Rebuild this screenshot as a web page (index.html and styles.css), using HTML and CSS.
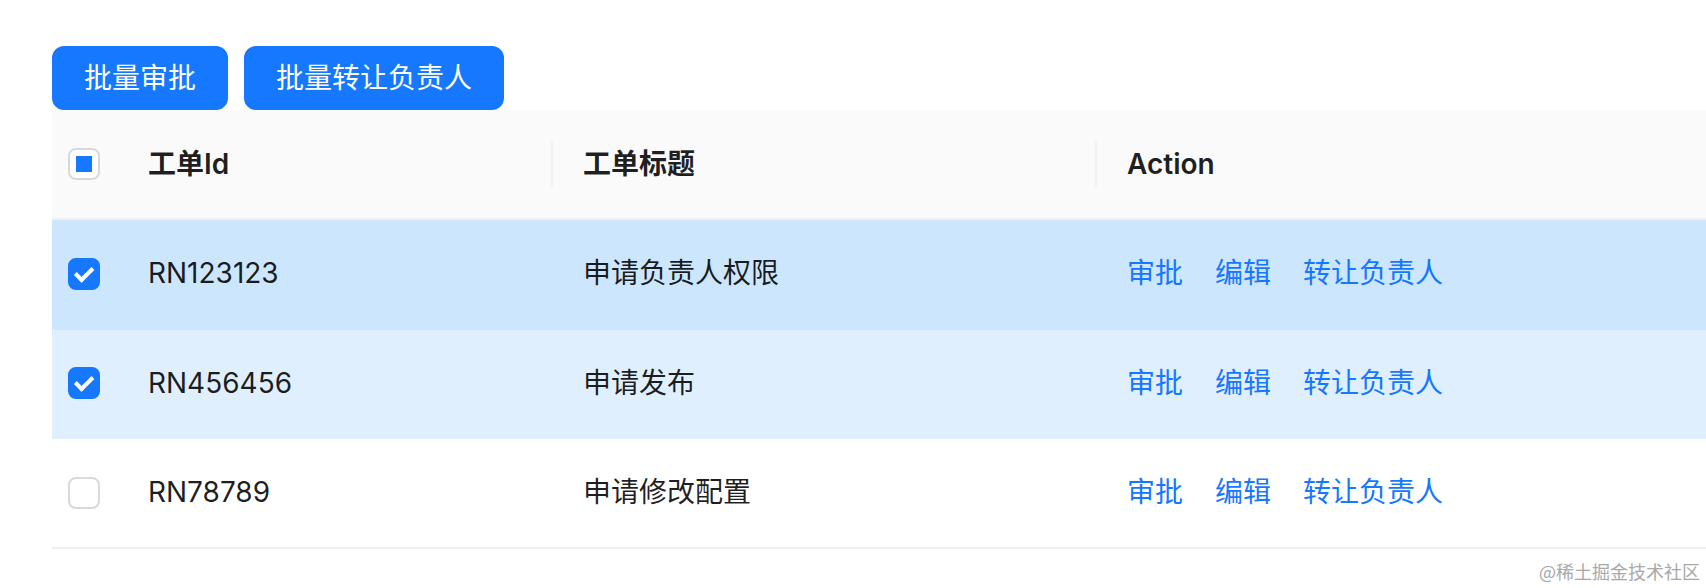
FILE: index.html
```html
<!DOCTYPE html>
<html lang="zh-CN">
  <head>
    <meta charset="UTF-8" />
    <meta name="viewport" content="width=device-width, initial-scale=1.0" />
    <title>工单列表</title>
    <link rel="stylesheet" href="styles.css">
  </head>
  <body>
    <div class="page">
      <div class="toolbar">
        <button class="btn">批量审批</button>
        <button class="btn">批量转让负责人</button>
      </div>
      <table class="ticket-table">
        <colgroup>
          <col class="col-select" />
          <col class="col-id" />
          <col class="col-title" />
          <col />
        </colgroup>
        <thead>
          <tr>
            <th class="cell-select"><span class="checkbox half"></span></th>
            <th>工单Id</th>
            <th class="split">工单标题</th>
            <th class="split">Action</th>
          </tr>
        </thead>
        <tbody>
          <tr class="selected hover">
            <td class="cell-select"><span class="checkbox checked"></span></td>
            <td>RN123123</td>
            <td>申请负责人权限</td>
            <td class="actions"><a>审批</a><a>编辑</a><a>转让负责人</a></td>
          </tr>
          <tr class="selected">
            <td class="cell-select"><span class="checkbox checked"></span></td>
            <td>RN456456</td>
            <td>申请发布</td>
            <td class="actions"><a>审批</a><a>编辑</a><a>转让负责人</a></td>
          </tr>
          <tr>
            <td class="cell-select"><span class="checkbox"></span></td>
            <td>RN78789</td>
            <td>申请修改配置</td>
            <td class="actions"><a>审批</a><a>编辑</a><a>转让负责人</a></td>
          </tr>
        </tbody>
      </table>
    </div>
    <div class="watermark">@稀土掘金技术社区</div>
  </body>
</html>
```

FILE: styles.css
```css
body {
  margin: 0;
  background: #fff;
  font-family: Inter, "Noto Sans CJK SC", sans-serif;
  color: rgba(0, 0, 0, 0.88);
}
.page {
  padding: 46px 0 0 52px;
}
.toolbar {
  display: flex;
  gap: 16px;
}
.btn {
  height: 64px;
  padding: 0 30px;
  border: 2px solid #1677ff;
  border-radius: 12px;
  background: #1677ff;
  color: #fff;
  font-family: inherit;
  font-size: 28px;
  line-height: 40px;
  cursor: pointer;
}
.ticket-table {
  width: 100%;
  border-collapse: collapse;
  table-layout: fixed;
  font-size: 28px;
}
.col-select {
  width: 64px;
}
.col-id {
  width: 435px;
}
.col-title {
  width: 544px;
}
.ticket-table th {
  position: relative;
  padding: 32px;
  line-height: 44px;
  text-align: left;
  font-weight: 600;
  background: #fafafa;
  border-bottom: 2px solid #f0f0f0;
}
.ticket-table th.split::before {
  content: "";
  position: absolute;
  left: 0;
  top: 50%;
  width: 2px;
  height: 44px;
  transform: translateY(-50%);
  background: #f0f0f0;
}
.ticket-table td {
  padding: 32px;
  line-height: 43.5px;
  border-bottom: 2px solid #f0f0f0;
}
.ticket-table .cell-select {
  padding: 0 16px;
  vertical-align: middle;
}
.ticket-table tr.selected td {
  background: #dfeffe;
  border-bottom-color: #dfeffe;
}
.ticket-table tr.selected.hover td {
  background: #cce6fd;
  border-bottom-color: #cce6fd;
}
.checkbox {
  position: relative;
  display: block;
  box-sizing: border-box;
  width: 32px;
  height: 32px;
  border: 2px solid #d9d9d9;
  border-radius: 8px;
  background: #fff;
}
.checkbox.half::after {
  content: "";
  position: absolute;
  left: 50%;
  top: 50%;
  width: 16px;
  height: 16px;
  transform: translate(-50%, -50%);
  background: #1677ff;
}
.checkbox.checked {
  border-color: #1677ff;
  background: #1677ff;
}
.checkbox.checked::after {
  content: "";
  position: absolute;
  left: 21.5%;
  top: 50%;
  box-sizing: border-box;
  width: 11.4px;
  height: 18.3px;
  border: 4px solid #fff;
  border-top: 0;
  border-left: 0;
  transform: rotate(45deg) translate(-50%, -50%);
}
.actions a {
  color: #1677ff;
  margin-right: 32px;
  cursor: pointer;
}
.watermark {
  position: absolute;
  right: 6px;
  bottom: 8px;
  font-family: "Noto Sans CJK SC", sans-serif;
  font-size: 18px;
  line-height: 18px;
  color: #a8a8a8;
}
```
